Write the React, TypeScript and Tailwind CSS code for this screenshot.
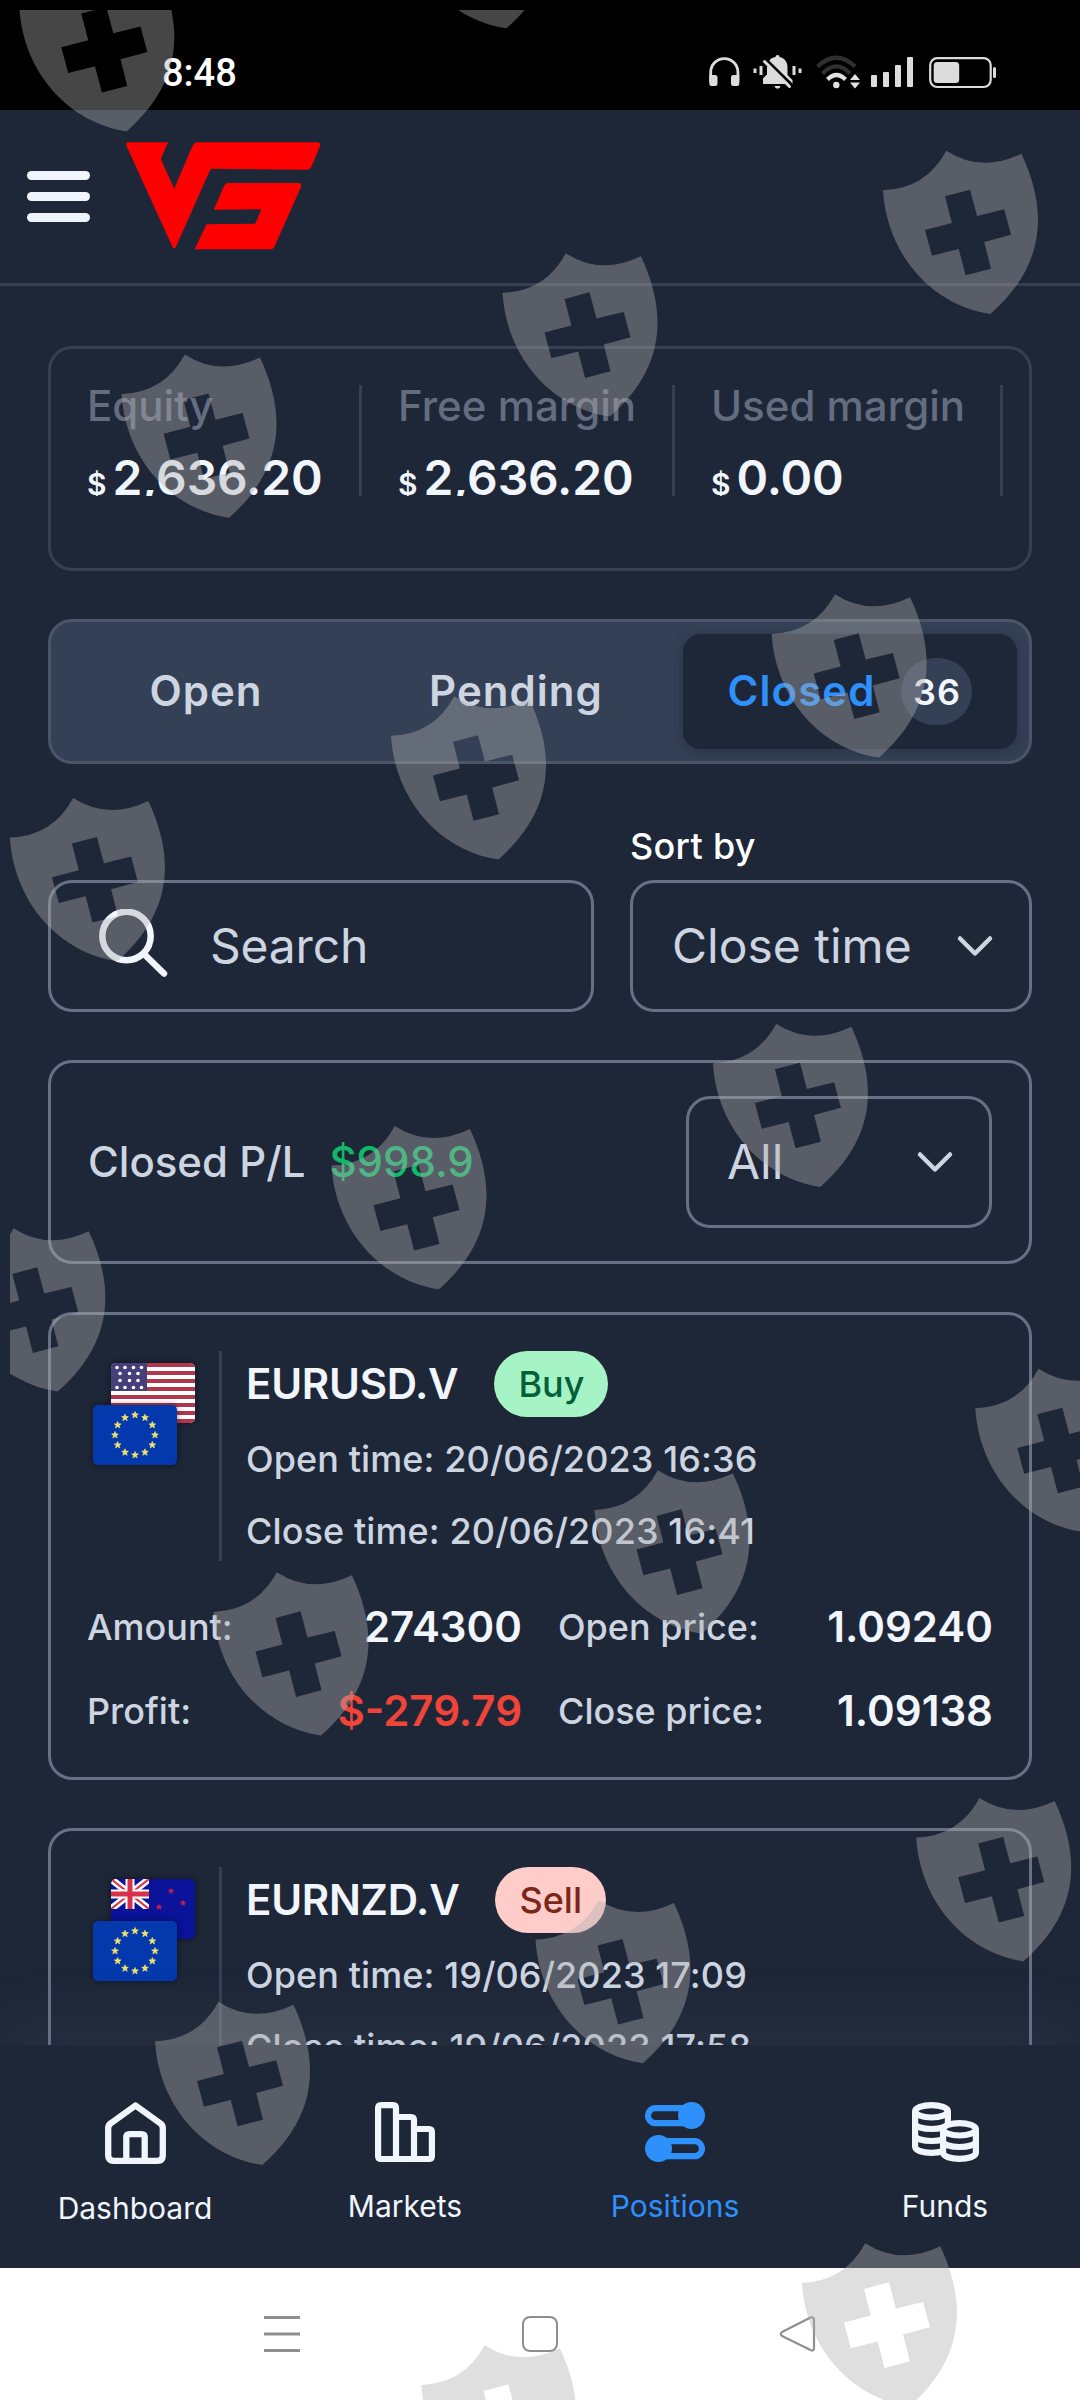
import type { ReactNode } from 'react';

interface Position {
  symbol: string;
  side: 'Buy' | 'Sell';
  quote: 'US' | 'NZ';
  openTime: string;
  closeTime: string;
  details?: {
    amount: string;
    profit: string;
    openPrice: string;
    closePrice: string;
  };
}

const stats = [
  { label: 'Equity', value: '2,636.20', box: 'w-[275px]' },
  { label: 'Free margin', value: '2,636.20', box: 'w-[313px] pl-[36px]' },
  { label: 'Used margin', value: '0.00', box: 'w-[328px] pl-[36px]' },
];

const positions: Position[] = [
  {
    symbol: 'EURUSD.V',
    side: 'Buy',
    quote: 'US',
    openTime: '20/06/2023 16:36',
    closeTime: '20/06/2023 16:41',
    details: {
      amount: '274300',
      profit: '$-279.79',
      openPrice: '1.09240',
      closePrice: '1.09138',
    },
  },
  {
    symbol: 'EURNZD.V',
    side: 'Sell',
    quote: 'NZ',
    openTime: '19/06/2023 17:09',
    closeTime: '19/06/2023 17:58',
  },
];

// left corner / top peak of every shield
const shields = [
  [19.3, -32],
  [399, -135],
  [883, 150.7],
  [502.5, 253.3],
  [121.5, 354.5],
  [771.7, 594.3],
  [391, 696.2],
  [9.9, 798],
  [712.9, 1023.7],
  [331.5, 1126],
  [-49.7, 1228.3],
  [975.3, 1368.7],
  [594.5, 1470.3],
  [213.5, 1572.3],
  [916.2, 1798],
  [535.5, 1900],
  [155, 2001.7],
  [801.9, 2243.3],
  [421.4, 2345.3],
];

function ShieldPattern() {
  return (
    <svg
      className="pointer-events-none absolute inset-0"
      width="1080"
      height="2400"
      viewBox="0 0 1080 2400"
    >
      <clipPath id="safe">
        <rect x="10" y="10" width="1070" height="2390" />
      </clipPath>
      <g clipPath="url(#safe)" fill="#b0b0b0" fillOpacity="0.4">
        {shields.map(([x, y]) => (
          <path
            key={`${x}-${y}`}
            transform={`translate(${x} ${y})`}
            fillRule="evenodd"
            d="M63.3 0Q98 22.5 138.4 3C163 55 166 112 107.4 163.3C50 155 4 105 0 39.6Q43 38 63.3 0ZM62 45.6L68.9 72.3L42 79.3L48.9 105L75.7 98.3L82.6 124.6L108 118L101.2 91.3L128 84L121.2 58.6L94 65.3L87 39Z"
          />
        ))}
      </g>
    </svg>
  );
}

function StatusBar() {
  return (
    <div className="flex h-[110px] shrink-0 bg-black pt-[50px] text-[#dcdcdc]">
      <span className="ml-[162px] h-[46px] font-['Roboto'] text-[38px] leading-[46px] font-medium text-white">
        8:48
      </span>
      <div className="mr-[83px] ml-auto flex h-[46px] items-start pt-[5px]">
        <svg
          className="mt-[1px]"
          width="31"
          height="34"
          viewBox="0 0 31 34"
          fill="currentColor"
        >
          <path
            d="M1.700 26V16.200a13.600 13.600 0 0 1 27.200 0V26"
            fill="none"
            stroke="currentColor"
            strokeWidth="2.800"
          />
          <path d="M0.300 19H6a2.500 2.500 0 0 1 2.500 2.500V27.500a2.500 2.500 0 0 1-2.500 2.500H2.800a2.500 2.500 0 0 1-2.500-2.500ZM30.300 19H24.500a2.500 2.500 0 0 0-2.500 2.500V27.500a2.500 2.500 0 0 0 2.500 2.500H27.800a2.500 2.500 0 0 0 2.500-2.500Z" />
        </svg>
        <svg
          className="ml-[13px]"
          width="50"
          height="34"
          viewBox="0 0 50 34"
          fill="currentColor"
        >
          <rect x="0.500" y="13.500" width="3" height="4.500" />
          <rect x="6.500" y="11" width="3" height="9" />
          <rect x="39.500" y="11" width="3" height="9" />
          <rect x="45.500" y="13.500" width="3" height="4.500" />
          <path d="M24.500 0a2 2 0 0 1 2 2c5 1 8 5 8 10v8l5 5v4H10v-5l4-4v-8c0-5 3-9 8.500-10a2 2 0 0 1 2-2ZM21.500 31h6q-.5 2.700-3 2.700t-3-2.700Z" />
          <path d="M10 4H17L13.500 14L10 20Z" fill="#000" />
          <path d="M14.500 12L31 28.500H10v-5l4-4Z" />
          <path d="M13.500 5L40 31" stroke="#000" strokeWidth="3" />
          <path
            d="M11.500 6.500L36.500 31.500"
            stroke="currentColor"
            strokeWidth="3"
            strokeLinecap="round"
          />
        </svg>
        <svg
          className="ml-[13px]"
          width="45"
          height="34"
          viewBox="0 0 45 34"
          fill="none"
          strokeWidth="4.200"
        >
          <path d="M1.500 11.500Q20.500-6 39 11.500" stroke="#303030" />
          <path d="M6.500 18.500Q20.500 4 34 18.500" stroke="#303030" />
          <path d="M11.500 24.500Q20.500 15.500 29.500 24.500" stroke="#e2e2e2" />
          <circle cx="20.300" cy="30" r="3.200" fill="#e2e2e2" />
          <path d="M39 19l5 6H34ZM39 33.500l5-6H34Z" fill="#e2e2e2" />
        </svg>
        <div className="ml-[10px] flex h-[32px] items-end gap-[6px]">
          <i className="h-[12px] w-[6px] rounded-[1px] bg-current" />
          <i className="h-[15px] w-[6px] rounded-[1px] bg-current" />
          <i className="h-[22px] w-[6px] rounded-[1px] bg-current" />
          <i className="h-[30px] w-[6px] rounded-[1px] bg-current" />
        </div>
        <svg
          className="mt-[2px] ml-[16px]"
          width="68"
          height="32"
          viewBox="0 0 68 32"
        >
          <rect
            x="1.200"
            y="1.200"
            width="60.500"
            height="28.800"
            rx="7"
            fill="none"
            stroke="currentColor"
            strokeWidth="2.200"
          />
          <rect
            x="4.700"
            y="5"
            width="25.500"
            height="21"
            rx="3.500"
            fill="currentColor"
          />
          <rect
            x="64"
            y="10"
            width="3"
            height="11"
            rx="1.500"
            fill="currentColor"
          />
        </svg>
      </div>
    </div>
  );
}

function Header() {
  return (
    <header className="flex h-[176px] shrink-0 border-b-[3px] border-[#354053]">
      <div className="mt-[61px] ml-[27px] flex w-[63px] flex-col gap-[12px]">
        <i className="h-[9px] rounded-full bg-[#f0f4fc]" />
        <i className="h-[9px] rounded-full bg-[#f0f4fc]" />
        <i className="h-[9px] rounded-full bg-[#f0f4fc]" />
      </div>
      <svg
        className="mt-[30px] ml-[35px]"
        width="200"
        height="114"
        viewBox="125 140 200 114"
        fill="#ff0000"
      >
        <path d="M128 142.300H168L160.800 159L174.200 188.700L192.500 146Q194 142.300 198 142.300H317.500Q321 142.300 319.800 146.500L311.500 166.500Q310 169.700 307 169.700L210.700 168.700L175.800 247Q174.200 250 172.600 247L126.500 146Q125.500 142.300 128 142.300Z" />
        <path d="M228 183H298.500Q302 183 301 187L274.500 246.500Q273 249.300 271 249.300H194.600L206.600 224.300L255.200 223.700L261.400 209.300L213.800 209.700L224 186Q225.300 183 228 183Z" />
      </svg>
    </header>
  );
}

function Chevron() {
  return (
    <svg
      width="38"
      height="24"
      viewBox="0 0 38 24"
      fill="none"
      stroke="#cdd5e1"
      strokeWidth="4.500"
      strokeLinecap="round"
      strokeLinejoin="round"
    >
      <path d="M4 4.500L19 19.500L34 4.500" />
    </svg>
  );
}

const starPath =
  'M0-3.600L1-1.200L3.400-1.100L1.500.5L2.200 3L0 1.600L-2.200 3L-1.500.5L-3.400-1.100L-1-1.200Z';

function FlagUS() {
  return (
    <svg width="84" height="60" viewBox="0 0 84 60">
      <rect width="84" height="60" fill="#fff" />
      {[0, 8, 16, 24, 32, 40, 48, 56].map((y) => (
        <rect key={y} y={y} width="84" height="4" fill="#b2364c" />
      ))}
      <rect width="36" height="28" fill="#453f7a" />
      {[4.5, 24.5].map((y) =>
        [6, 14, 22.5, 30.5].map((x) => (
          <circle key={`${x}-${y}`} cx={x} cy={y} r="1.800" fill="#fff" />
        )),
      )}
      {[10.5, 17.5].map((y) =>
        [9, 18.5, 27].map((x) => (
          <circle key={`${x}-${y}`} cx={x} cy={y} r="1.800" fill="#fff" />
        )),
      )}
    </svg>
  );
}

function FlagNZ() {
  return (
    <svg width="84" height="60" viewBox="0 0 84 60">
      <rect width="84" height="60" fill="#0a1399" />
      <svg width="38" height="30" viewBox="0 0 38 30">
        <path d="M0 0L38 30M38 0L0 30" stroke="#fff" strokeWidth="7" />
        <path d="M0 0L38 30M38 0L0 30" stroke="#d8304a" strokeWidth="2" />
        <path d="M19 0V30M0 15H38" stroke="#fff" strokeWidth="9" />
        <path d="M19 0V30M0 15H38" stroke="#d8304a" strokeWidth="5" />
      </svg>
      {[
        [60, 12],
        [72, 24],
        [48, 28],
        [60, 48],
      ].map(([x, y]) => (
        <path
          key={`${x}-${y}`}
          transform={`translate(${x} ${y})`}
          d={starPath}
          fill="#c01d55"
        />
      ))}
    </svg>
  );
}

function FlagEU() {
  return (
    <svg width="84" height="60" viewBox="0 0 84 60">
      <rect width="84" height="60" fill="#0439ad" />
      {Array.from({ length: 12 }, (_, i) => {
        const a = (i * Math.PI) / 6;
        return (
          <path
            key={i}
            transform={`translate(${42 + 20 * Math.sin(a)} ${30 - 20 * Math.cos(a)})`}
            d={starPath}
            fill="#f3e36b"
            stroke="#f3e36b"
            strokeWidth="0.600"
          />
        );
      })}
    </svg>
  );
}

function DetailRow({
  label,
  value,
  negative,
}: {
  label: string;
  value: string;
  negative?: boolean;
}) {
  return (
    <div className="flex h-[42px] items-center justify-between">
      <span className="text-[36px] font-medium text-[#cdd5e1]">{label}</span>
      <span
        className={
          negative
            ? 'pb-[2px] text-[42px] font-semibold text-[#f04438]'
            : 'pb-[2px] text-[42px] font-semibold text-[#f1f5fc]'
        }
      >
        {value}
      </span>
    </div>
  );
}

function PositionCard({ position: p }: { position: Position }) {
  return (
    <article className="mt-[48px] h-[468px] shrink-0 rounded-[24px] border-[3px] border-[#677084] px-[36px] pt-[36px]">
      <div className="flex h-[210px]">
        <div className="relative w-[135px] border-r-[3px] border-[#354053]">
          <div className="absolute top-[12px] left-[24px] overflow-hidden rounded-[5px] shadow-[0_0_6px_rgba(0,0,0,0.5)]">
            {p.quote === 'US' ? <FlagUS /> : <FlagNZ />}
          </div>
          <div className="absolute top-[54px] left-[6px] overflow-hidden rounded-[5px] shadow-[0_0_6px_rgba(0,0,0,0.5)]">
            <FlagEU />
          </div>
        </div>
        <div className="pl-[24px]">
          <div className="flex h-[66px] items-center">
            <h2 className="pb-[2px] text-[42px] font-semibold tracking-[-0.25px] text-[#f1f5fc]">
              {p.symbol}
            </h2>
            <span
              className={
                p.side === 'Buy'
                  ? 'ml-[36px] flex h-[66px] items-center rounded-full bg-[#a6f4c5] px-[24px] text-[36px] font-medium text-[#05603a]'
                  : 'ml-[36px] flex h-[66px] items-center rounded-full bg-[#fecdca] px-[24px] text-[36px] font-medium text-[#7a271a]'
              }
            >
              {p.side}
            </span>
          </div>
          <div className="mt-[6px] text-[36px] leading-[72px] font-medium tracking-[0.1px] text-[#cdd5e1]">
            <p>Open time: {p.openTime}</p>
            <p>Close time: {p.closeTime}</p>
          </div>
        </div>
      </div>
      {p.details && (
        <div className="mt-[45px] grid grid-cols-2 gap-x-[36px] gap-y-[42px]">
          <DetailRow label="Amount:" value={p.details.amount} />
          <DetailRow label="Open price:" value={p.details.openPrice} />
          <DetailRow label="Profit:" value={p.details.profit} negative />
          <DetailRow label="Close price:" value={p.details.closePrice} />
        </div>
      )}
    </article>
  );
}

function NavItem({
  label,
  active,
  children,
}: {
  label: string;
  active?: boolean;
  children: ReactNode;
}) {
  return (
    <a
      className={
        active
          ? 'flex flex-1 flex-col items-center text-[#2e90fa]'
          : 'flex flex-1 flex-col items-center text-[#f1f5fc]'
      }
    >
      {children}
      <span className="mt-[24px] text-[30px] leading-[40px]">{label}</span>
    </a>
  );
}

function BottomNav() {
  return (
    <nav className="relative flex h-[223px] shrink-0 bg-[#1e2738] pt-[57px] shadow-[0_-20px_60px_rgba(102,112,133,0.12)]">
      <NavItem label="Dashboard">
        <svg
          width="61"
          height="62"
          viewBox="0 0 61 62"
          fill="none"
          stroke="currentColor"
          strokeWidth="6.300"
        >
          <path
            strokeLinejoin="round"
            d="M3.200 26Q3.200 23.500 5.500 21.500L30.500 3.500L55.500 21.500Q57.800 23.500 57.800 26V53.500Q57.800 58.800 52.500 58.800H8.500Q3.200 58.800 3.200 53.500Z"
          />
          <path d="M21.300 58V35.500Q21.300 32.200 24.600 32.200H36.400Q39.700 32.200 39.700 35.500V58" />
        </svg>
      </NavItem>
      <NavItem label="Markets">
        <svg
          width="60"
          height="60"
          viewBox="0 0 60 60"
          fill="none"
          stroke="currentColor"
          strokeWidth="6.200"
        >
          <path d="M21 57H6.100Q3.100 57 3.100 54V6.100Q3.100 3.100 6.100 3.100H18Q21 3.100 21 6.100Z" />
          <path d="M21 15H36Q39 15 39 18V57H21" />
          <path d="M39 27H53.900Q56.900 27 56.900 30V54Q56.900 57 53.900 57H39" />
        </svg>
      </NavItem>
      <NavItem label="Positions" active>
        <svg
          width="60"
          height="60"
          viewBox="0 0 60 60"
          fill="none"
          stroke="currentColor"
          strokeWidth="6.200"
        >
          <path d="M40 6.200H10.500a7.500 7.500 0 0 0 0 15H40" />
          <circle
            cx="46.500"
            cy="13.500"
            r="13.500"
            fill="currentColor"
            stroke="none"
          />
          <path d="M20 39.200H49.500a7.500 7.500 0 0 1 0 15H20" />
          <circle
            cx="13.500"
            cy="46.500"
            r="13.500"
            fill="currentColor"
            stroke="none"
          />
        </svg>
      </NavItem>
      <NavItem label="Funds">
        <svg
          width="67"
          height="60"
          viewBox="0 0 67 60"
          fill="none"
          stroke="currentColor"
          strokeWidth="6.200"
        >
          <ellipse cx="19.500" cy="9.300" rx="16.400" ry="6.200" />
          <path d="M3.100 9.300V44.500C3.100 53 35.900 53 35.900 44.500V9.300" />
          <path d="M3.100 21C3.100 29 35.900 29 35.900 21M3.100 33C3.100 41 35.900 41 35.900 33" />
          <path
            d="M31.100 27.500V50.500C31.100 59 63.900 59 63.900 50.500V27.500"
            fill="#1e2738"
          />
          <ellipse cx="47.500" cy="27.300" rx="16.400" ry="6.200" fill="#1e2738" />
          <path d="M31.100 39C31.100 47 63.900 47 63.900 39" />
        </svg>
      </NavItem>
    </nav>
  );
}

function SystemNav() {
  return (
    <div className="relative flex h-[132px] shrink-0 bg-white pt-[48px]">
      <svg
        className="ml-[264px]"
        width="36"
        height="36"
        stroke="#8f8f8f"
        strokeWidth="3"
      >
        <path d="M0 1.500H36M0 18H36M0 34.500H36" />
      </svg>
      <i className="ml-[222px] h-[36px] w-[36px] rounded-[8px] border-[2.500px] border-[#8f8f8f]" />
      <svg
        className="ml-[221px]"
        width="37"
        height="36"
        fill="none"
        stroke="#8f8f8f"
        strokeWidth="2.200"
        strokeLinejoin="round"
      >
        <path d="M3 16L31.500 1.500Q35 .500 35 4V32Q35 35.500 31.500 34L3 20Q.500 18 3 16Z" />
      </svg>
    </div>
  );
}

export default function App() {
  return (
    <div className="relative flex h-[2400px] w-[1080px] flex-col overflow-hidden bg-[#1e2738] font-['Inter',sans-serif]">
      <StatusBar />
      <Header />
      <main className="flex min-h-0 flex-1 flex-col overflow-hidden px-[48px]">
        {/* Account summary */}
        <section className="mt-[60px] h-[225px] shrink-0 rounded-[24px] border-[3px] border-[#354053] px-[36px] pt-[36px]">
          <div className="flex h-[111px] overflow-visible">
            {stats.map((s) => (
              <div
                key={s.label}
                className={`${s.box} h-[111px] shrink-0 overflow-hidden border-r-[3px] border-[#354053] whitespace-nowrap`}
              >
                <p className="h-[64px] text-[42px] leading-[42px] font-medium text-[#646c80]">
                  {s.label}
                </p>
                <p className="leading-[58px] font-semibold text-[#f1f5fc]">
                  <span className="mr-[6px] text-[30px]">$</span>
                  <span className="text-[48px] tracking-[-0.15px]">
                    {s.value}
                  </span>
                </p>
              </div>
            ))}
          </div>
        </section>

        {/* Tabs */}
        <section className="mt-[48px] flex h-[145px] shrink-0 rounded-[24px] border-[3px] border-[#4b5567] bg-[#344055] p-[12px] text-[42px] font-semibold tracking-wide text-[#cdd5e1]">
          <button className="w-[286px] pb-[2px]">Open</button>
          <button className="w-[334px] pb-[2px]">Pending</button>
          <button className="flex w-[334px] items-center justify-center rounded-[18px] bg-[#1e2738] text-[#2e90fa] shadow-[0_3px_12px_rgba(16,24,40,0.3)]">
            <span className="pb-[2px]">Closed</span>
            <span className="ml-[26px] flex h-[67px] w-[71px] items-center justify-center rounded-full bg-[#344055] text-[36px] text-[#f1f5fc]">
              36
            </span>
          </button>
        </section>

        {/* Search and sort */}
        <section className="mt-[60px] flex shrink-0 items-end gap-[36px]">
          <div className="flex h-[132px] w-[546px] items-center rounded-[24px] border-[3px] border-[#677084] pl-[46px]">
            <svg
              width="74"
              height="74"
              viewBox="0 0 74 74"
              fill="none"
              stroke="#f1f5fc"
              strokeWidth="6.500"
              strokeLinecap="round"
            >
              <circle cx="29.500" cy="27" r="24.200" />
              <path d="M47 45L67 64.500" />
            </svg>
            <span className="ml-[39px] text-[48px] tracking-[-0.2px] text-[#cdd5e1]">
              Search
            </span>
          </div>
          <div className="w-[402px]">
            <p className="mb-[12px] text-[36px] leading-[44px] font-medium tracking-[0.3px] text-white">
              Sort by
            </p>
            <div className="flex h-[132px] items-center justify-between rounded-[24px] border-[3px] border-[#677084] pr-[35px] pl-[39px] text-[48px] text-[#cdd5e1]">
              Close time
              <Chevron />
            </div>
          </div>
        </section>

        {/* Closed P/L */}
        <section className="mt-[48px] flex h-[204px] shrink-0 items-center rounded-[24px] border-[3px] border-[#677084] px-[37px] text-[42px] font-medium">
          <span className="pb-[2px] text-[#cdd5e1]">Closed P/L</span>
          <span className="ml-[24px] pb-[2px] text-[#12b76a]">$998.9</span>
          <div className="ml-auto flex h-[132px] w-[306px] items-center justify-between rounded-[24px] border-[3px] border-[#677084] pr-[35px] pl-[38px] text-[48px] font-normal text-[#cdd5e1]">
            All
            <Chevron />
          </div>
        </section>

        {positions.map((p) => (
          <PositionCard key={p.symbol} position={p} />
        ))}
      </main>
      <BottomNav />
      <SystemNav />
      <ShieldPattern />
    </div>
  );
}
